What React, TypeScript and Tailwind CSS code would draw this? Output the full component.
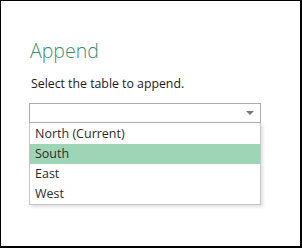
import React from "react";

export default function App() {
  const items = ["North (Current)", "South", "East", "West"];
  return (
    <div
      className="w-[302px] h-[248px] bg-white border-l border-t border-r-2 border-b-2 border-black flex flex-col pl-[28px]"
      style={{ fontFamily: '"Open Sans", "Noto Sans", sans-serif' }}
    >
      <div className="pt-[38px] pl-[1px] text-[19.5px] leading-[24px] font-light text-[#379171]">
        Append
      </div>
      <div className="mt-[12px] pl-[2px] text-[12.3px] leading-[18px] text-[#1a1a1a]">
        Select the table to append.
      </div>
      <div className="mt-[10px] w-[232px] flex flex-col">
        <div className="h-[20px] border border-[#ababab] flex items-center justify-end pr-[6px]">
          <svg width="8" height="4" viewBox="0 0 8 4">
            <polygon points="0,0 8,0 4,4" fill="#787878" />
          </svg>
        </div>
        <div className="border border-t-0 border-[#c6c6c6] shadow-[2px_2px_3px_rgba(0,0,0,0.12)] flex flex-col pt-[1px]">
          {items.map((it) => (
            <div
              key={it}
              className={
                "h-[20px] flex items-center pl-[5px] text-[12.5px] text-[#2b2b2b] " +
                (it === "South" ? "bg-[#9fd5b7]" : "")
              }
            >
              {it}
            </div>
          ))}
        </div>
      </div>
    </div>
  );
}
